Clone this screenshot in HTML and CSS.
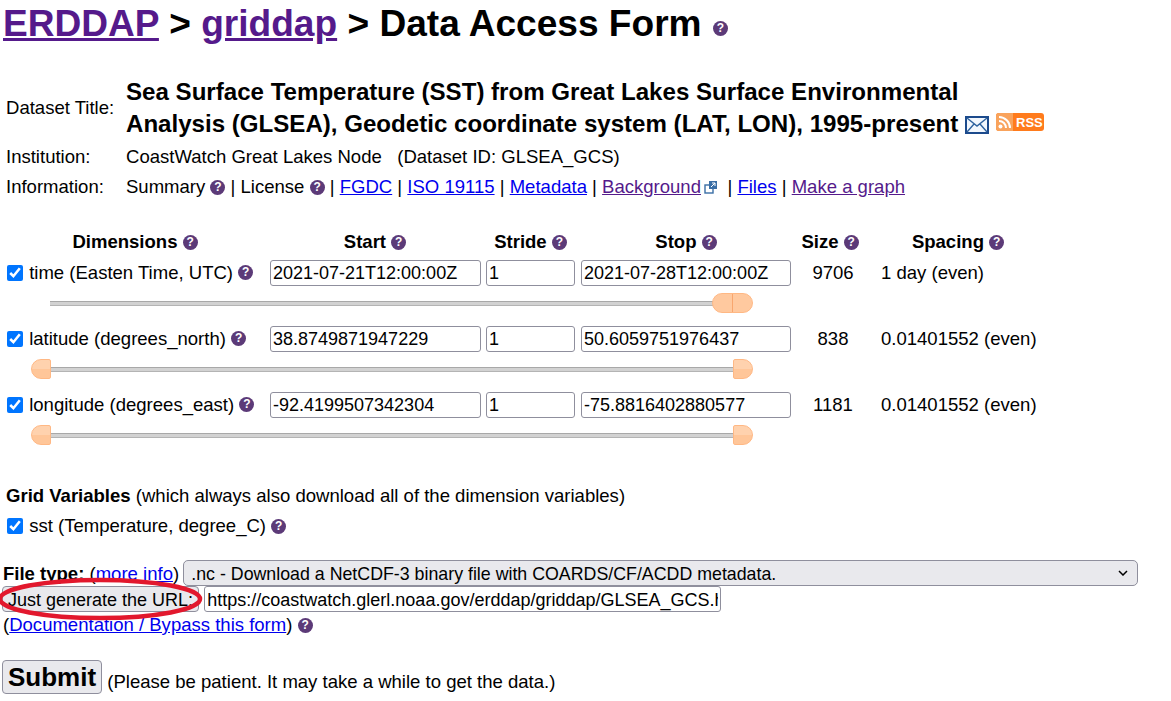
FILE: index.html

```html
<!DOCTYPE html>
<html lang="en">
<head>
  <meta charset="UTF-8">
  <title>ERDDAP - griddap - Data Access Form</title>
  <meta name="viewport" content="width=device-width, initial-scale=1.0">
  <link rel="stylesheet" href="styles.css">
</head>
<body>
  <h1><a href="#">ERDDAP</a> &gt; <a href="#">griddap</a> &gt; Data Access Form <span class="help help-small">?</span></h1>

  <table class="info">
    <tr>
      <td class="info-label">Dataset Title:</td>
      <td class="dataset-title">Sea Surface Temperature (SST) from Great Lakes Surface Environmental<br>
        Analysis (GLSEA), Geodetic coordinate system (LAT, LON), 1995-present
        <svg class="mail" width="24" height="18" viewBox="0 0 24 18"><rect x="1" y="1" width="22" height="16" fill="#f2f7fd" stroke="#1c4a8c" stroke-width="2"/><path d="M2 2l10 8 10-8M2 16l7-8M22 16l-7-8" fill="none" stroke="#2f639f" stroke-width="1.4"/></svg>
        <svg class="rss" width="48" height="18" viewBox="0 0 48 18"><rect width="48" height="18" rx="3" fill="#ff7b1c"/><path d="M3 0h14v18H3a3 3 0 0 1-3-3V3a3 3 0 0 1 3-3z" fill="#f9a35c"/><circle cx="4.5" cy="13.5" r="2" fill="#fff"/><path d="M3 8a7 7 0 0 1 7 7M3 4a11 11 0 0 1 11 11" fill="none" stroke="#fff" stroke-width="2"/><text x="20" y="14" class="rss-text">RSS</text></svg>
      </td>
    </tr>
    <tr>
      <td class="info-label">Institution:</td>
      <td>CoastWatch Great Lakes Node &nbsp; (Dataset ID: GLSEA_GCS)</td>
    </tr>
    <tr>
      <td class="info-label">Information:</td>
      <td>Summary <span class="help">?</span> | License <span class="help">?</span> | <a class="link" href="#">FGDC</a> | <a class="link" href="#">ISO 19115</a> | <a class="link" href="#">Metadata</a> | <a href="#">Background</a>
        <svg class="ext" width="14" height="14" viewBox="0 0 14 14"><rect x="1" y="5" width="8" height="8" fill="#fff" stroke="#3a6ea5" stroke-width="1.4"/><rect x="5" y="1" width="8" height="8" fill="#3a6ea5"/><path d="M7 7l4-4M8 3h3v3" fill="none" stroke="#fff"/></svg>
        <span class="ext-sep">&nbsp;|</span> <a class="link" href="#">Files</a> | <a href="#">Make a graph</a></td>
    </tr>
  </table>

  <div class="dims">
    <div class="dim-head dim-head-pad">Dimensions <span class="help">?</span></div>
    <div class="dim-head dim-head-pad">Start <span class="help">?</span></div>
    <div class="dim-head dim-head-pad">Stride <span class="help">?</span></div>
    <div class="dim-head">Stop <span class="help">?</span></div>
    <div class="dim-head dim-head-pad">Size <span class="help">?</span></div>
    <div class="dim-head">Spacing <span class="help">?</span></div>

    <div class="dim-name"><input type="checkbox" checked> time (Easten Time, UTC) <span class="help">?</span></div>
    <div class="dim-cell"><input class="field field-start" type="text" value="2021-07-21T12:00:00Z"></div>
    <div class="dim-cell"><input class="field field-stride" type="text" value="1"></div>
    <div class="dim-cell"><input class="field field-stop" type="text" value="2021-07-28T12:00:00Z"></div>
    <div class="dim-size">9706</div>
    <div class="dim-spacing">1 day (even)</div>
    <div class="slider"><span class="handle handle-time"></span></div>

    <div class="dim-name"><input type="checkbox" checked> latitude (degrees_north) <span class="help">?</span></div>
    <div class="dim-cell"><input class="field field-start" type="text" value="38.8749871947229"></div>
    <div class="dim-cell"><input class="field field-stride" type="text" value="1"></div>
    <div class="dim-cell"><input class="field field-stop" type="text" value="50.6059751976437"></div>
    <div class="dim-size">838</div>
    <div class="dim-spacing">0.01401552 (even)</div>
    <div class="slider"><span class="handle handle-left"></span><span class="handle handle-right"></span></div>

    <div class="dim-name"><input type="checkbox" checked> longitude (degrees_east) <span class="help">?</span></div>
    <div class="dim-cell"><input class="field field-start" type="text" value="-92.4199507342304"></div>
    <div class="dim-cell"><input class="field field-stride" type="text" value="1"></div>
    <div class="dim-cell"><input class="field field-stop" type="text" value="-75.8816402880577"></div>
    <div class="dim-size">1181</div>
    <div class="dim-spacing">0.01401552 (even)</div>
    <div class="slider"><span class="handle handle-left"></span><span class="handle handle-right"></span></div>
  </div>

  <div class="vars">
    <div><b>Grid Variables</b> (which always also download all of the dimension variables)</div>
    <div class="var-row"><input type="checkbox" checked> sst (Temperature, degree_C) <span class="help">?</span></div>
  </div>

  <div class="file-row">
    <b>File type:</b> (<a class="link" href="#">more info</a>)
    <select class="file-select"><option>.nc - Download a NetCDF-3 binary file with COARDS/CF/ACDD metadata.</option></select>
  </div>
  <div class="url-row">
    <button class="url-btn" type="button">Just generate the URL:</button>
    <input class="field url-field" type="text" value="https://coastwatch.glerl.noaa.gov/erddap/griddap/GLSEA_GCS.html">
    <svg class="circled" width="206" height="48" viewBox="0 0 206 48"><ellipse cx="100" cy="23" rx="100" ry="19" fill="none" stroke="#e2182d" stroke-width="4.5"/></svg>
  </div>
  <div class="doc-row">(<a class="link" href="#">Documentation / Bypass this form</a>) <span class="help">?</span></div>

  <div class="submit-row">
    <button class="submit" type="button">Submit</button> (Please be patient. It may take a while to get the data.)
  </div>
</body>
</html>
```

FILE: styles.css

```css
body {
  font-family: "Liberation Sans", Arial, sans-serif;
  font-size: 18.55px;
  color: #000000;
  background-color: #ffffff;
  margin: 0;
  padding: 0 3px;
  overflow: hidden;
}
a {
  color: #551a8b;
}
a.link {
  color: #0000ee;
}
h1 {
  font-size: 37.1px;
  line-height: 42px;
  margin: 2px 0 0;
}
.help {
  display: inline-block;
  width: 15px;
  height: 15px;
  line-height: 15px;
  border-radius: 50%;
  background-color: #5c3a78;
  color: #ffffff;
  font-size: 12px;
  font-weight: bold;
  text-align: center;
  vertical-align: 2px;
}
.help-small {
  margin-left: 1px;
  vertical-align: 4px;
}
.info {
  border-collapse: collapse;
  margin-top: 29px;
}
.info td {
  padding: 3px;
  line-height: 24px;
}
.info-label {
  width: 114px;
}
.info td.dataset-title {
  font-size: 24.1px;
  font-weight: bold;
  line-height: 32px;
  padding-bottom: 2px;
}
.mail {
  vertical-align: -2px;
}
.ext {
  margin-left: -2px;
  vertical-align: -1px;
}
.ext-sep {
  margin-left: -1px;
}
.rss {
  vertical-align: 1px;
}
.rss-text {
  font-size: 13px;
  font-weight: bold;
  fill: #ffffff;
}
.dims {
  display: grid;
  grid-template-columns: 264px 216px 95px 210px 84px 166px;
  grid-template-rows: 30px 30px 36px 30px 36px 30px 36px;
  margin-top: 26px;
  margin-left: 3px;
  width: 835px;
}
.dim-head {
  font-weight: bold;
  text-align: center;
  line-height: 28px;
  white-space: nowrap;
}
.dim-head-pad {
  padding-right: 6px;
}
.dim-name,
.dim-size,
.dim-spacing {
  line-height: 30px;
  white-space: nowrap;
}
.dim-name .help {
  vertical-align: 3px;
}
.dim-size {
  text-align: center;
}
.dim-spacing {
  padding-left: 6px;
}
.dim-cell {
  display: flex;
  align-items: center;
}
.dim-name input,
.var-row input {
  width: 16px;
  height: 16px;
  margin: 0 1px 0 1px;
  vertical-align: -2px;
}
.field {
  box-sizing: border-box;
  font-family: inherit;
  font-size: 18px;
  height: 26px;
  padding: 1px 2px;
  border: 1px solid #8f8f9d;
  border-radius: 3px;
}
.field-start {
  width: 211px;
}
.field-stride {
  width: 89px;
}
.field-stop {
  width: 210px;
}
.slider {
  grid-column: 1 / -1;
  position: relative;
  box-sizing: border-box;
  width: 700px;
  height: 5px;
  margin: 13px 0 0 44px;
  background-color: #d2d2d2;
  border-top: 1px solid #a8a8a8;
  border-bottom: 1px solid #b4b4b4;
}
.handle {
  position: absolute;
  top: -9px;
  width: 20px;
  height: 20px;
  box-sizing: border-box;
  background: linear-gradient(to bottom, #ffd2ae 50%, #ffc699 50%);
  border: 1px solid #ffb884;
}
.handle-left {
  left: -19px;
  border-radius: 10px 2px 2px 10px;
}
.handle-right {
  right: -3px;
  border-radius: 2px 10px 10px 2px;
}
.handle-time {
  right: -3px;
  width: 41px;
  border-radius: 10px;
  background: linear-gradient(to right, #ffc99f 49%, #f8a66e 49%, #f8a66e 52%, #ffc99f 52%);
}
.vars {
  margin-top: 25px;
  margin-left: 3px;
  line-height: 30px;
}
.file-row {
  margin-top: 19px;
  line-height: 26px;
  height: 26px;
}
.file-select {
  appearance: none;
  box-sizing: border-box;
  font-family: inherit;
  font-size: 17.8px;
  color: #000000;
  width: 955px;
  height: 26px;
  margin-left: -1px;
  padding: 2px 7px 0;
  background: #e9e9ed url("data:image/svg+xml,%3Csvg xmlns='http://www.w3.org/2000/svg' width='10' height='6'%3E%3Cpath d='M1 1l4 4 4-4' fill='none' stroke='%23000' stroke-width='1.5'/%3E%3C/svg%3E") no-repeat right 9px center;
  border: 1px solid #8f8f9d;
  border-radius: 5px;
}
.url-row {
  position: relative;
  height: 26px;
}
.url-btn {
  font-family: inherit;
  font-size: 18px;
  height: 26px;
  margin-left: -1px;
  padding: 2px 5px 0;
  background-color: #e9e9ed;
  border: 1px solid #8f8f9d;
  border-radius: 4px;
}
.url-field {
  width: 517px;
  padding: 2px 2px 0;
}
.circled {
  position: absolute;
  left: -3px;
  top: -10px;
}
.doc-row {
  line-height: 25px;
}
.submit-row {
  margin-top: 23px;
}
.submit {
  font-family: inherit;
  font-size: 26px;
  font-weight: bold;
  height: 34px;
  margin-left: -1px;
  padding: 0 5px;
  vertical-align: 2px;
  background-color: #e9e9ed;
  border: 1px solid #8f8f9d;
  border-radius: 4px;
}
```
